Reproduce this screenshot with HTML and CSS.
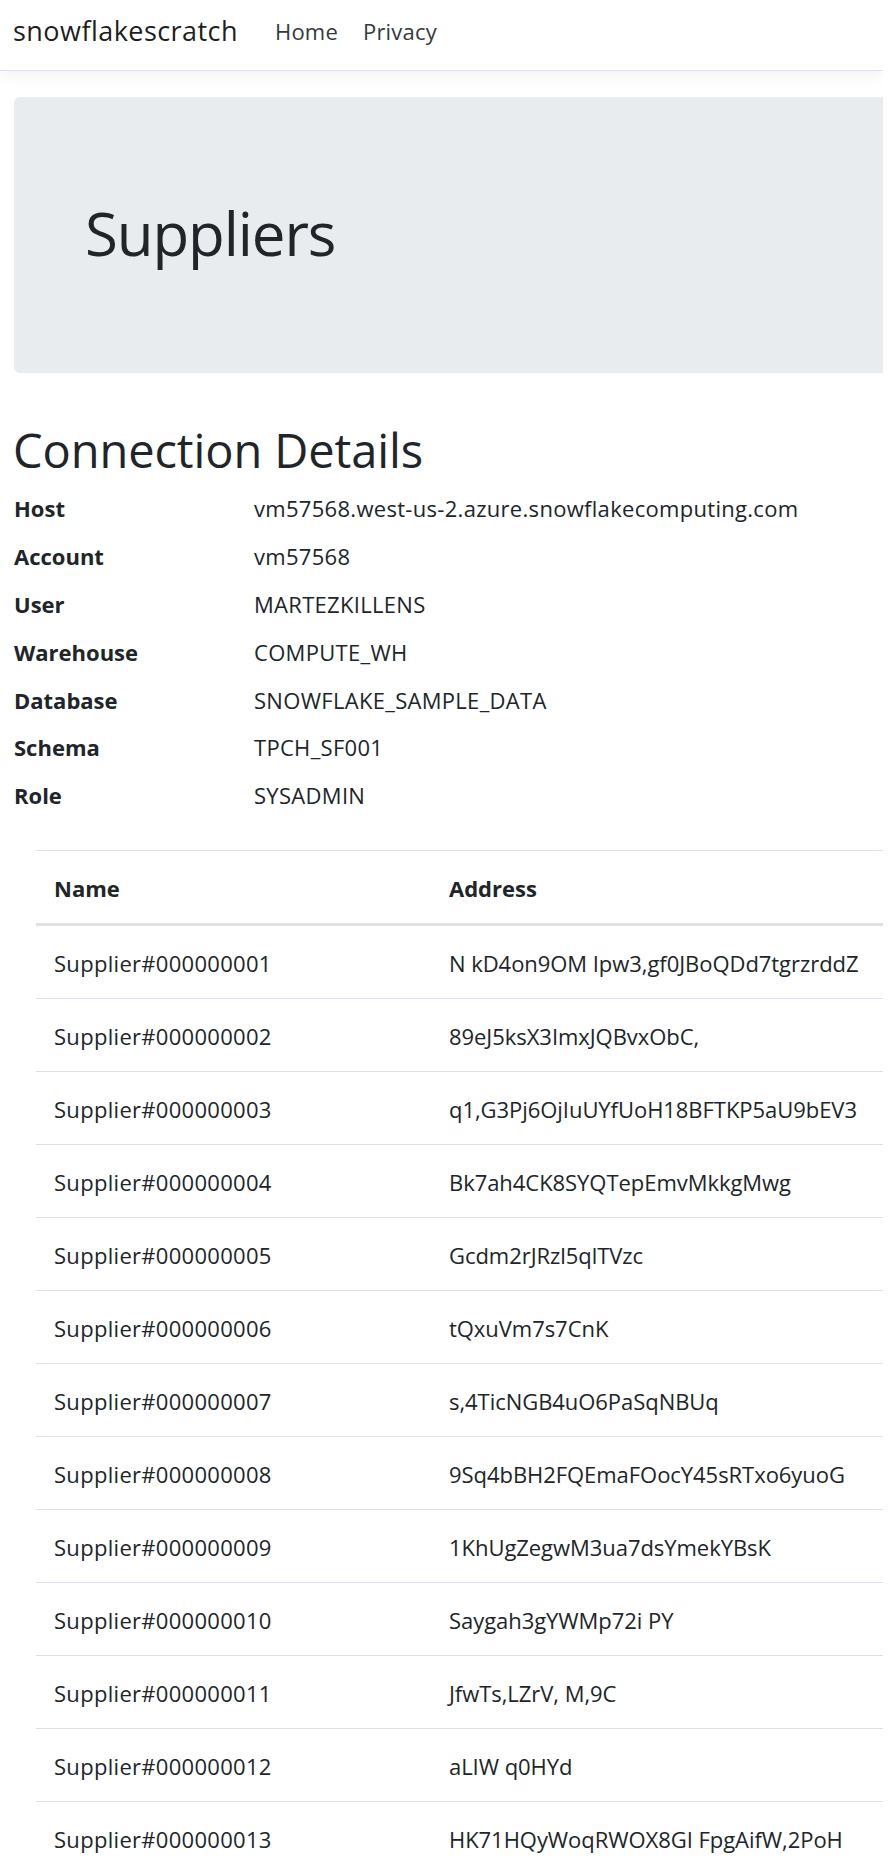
FILE: index.html
```html
<!DOCTYPE html>
<html lang="en">
<head>
<meta charset="utf-8">
<title>Suppliers - snowflakescratch</title>
<link rel="stylesheet" href="styles.css">
</head>
<body>
<div class="page">
  <header class="navbar">
    <a class="brand" href="#">snowflakescratch</a>
    <nav class="nav">
      <a class="nav-link" href="#">Home</a>
      <a class="nav-link" href="#">Privacy</a>
    </nav>
  </header>

  <main class="main">
    <section class="jumbotron">
      <h1 class="display">Suppliers</h1>
    </section>

    <h2 class="section-title">Connection Details</h2>
    <dl class="details">
      <dt>Host</dt><dd>vm57568.west-us-2.azure.snowflakecomputing.com</dd>
      <dt>Account</dt><dd>vm57568</dd>
      <dt>User</dt><dd>MARTEZKILLENS</dd>
      <dt>Warehouse</dt><dd>COMPUTE_WH</dd>
      <dt>Database</dt><dd>SNOWFLAKE_SAMPLE_DATA</dd>
      <dt>Schema</dt><dd>TPCH_SF001</dd>
      <dt>Role</dt><dd>SYSADMIN</dd>
    </dl>

    <table class="table">
      <thead>
        <tr><th class="col-name">Name</th><th class="col-addr">Address</th></tr>
      </thead>
      <tbody>
        <tr><td>Supplier#000000001</td><td class="addr">N kD4on9OM Ipw3,gf0JBoQDd7tgrzrddZ</td></tr>
        <tr><td>Supplier#000000002</td><td class="addr">89eJ5ksX3ImxJQBvxObC,</td></tr>
        <tr><td>Supplier#000000003</td><td class="addr">q1,G3Pj6OjIuUYfUoH18BFTKP5aU9bEV3</td></tr>
        <tr><td>Supplier#000000004</td><td class="addr">Bk7ah4CK8SYQTepEmvMkkgMwg</td></tr>
        <tr><td>Supplier#000000005</td><td class="addr">Gcdm2rJRzl5qlTVzc</td></tr>
        <tr><td>Supplier#000000006</td><td class="addr">tQxuVm7s7CnK</td></tr>
        <tr><td>Supplier#000000007</td><td class="addr">s,4TicNGB4uO6PaSqNBUq</td></tr>
        <tr><td>Supplier#000000008</td><td class="addr">9Sq4bBH2FQEmaFOocY45sRTxo6yuoG</td></tr>
        <tr><td>Supplier#000000009</td><td class="addr">1KhUgZegwM3ua7dsYmekYBsK</td></tr>
        <tr><td>Supplier#000000010</td><td class="addr">Saygah3gYWMp72i PY</td></tr>
        <tr><td>Supplier#000000011</td><td class="addr">JfwTs,LZrV, M,9C</td></tr>
        <tr><td>Supplier#000000012</td><td class="addr">aLIW q0HYd</td></tr>
        <tr><td>Supplier#000000013</td><td class="addr">HK71HQyWoqRWOX8GI FpgAifW,2PoH</td></tr>
      </tbody>
    </table>
  </main>
</div>
</body>
</html>
```
FILE: styles.css
```css
html, body {
  margin: 0;
  padding: 0;
  background: #fff;
}

body {
  font-family: "Open Sans", "Noto Sans", sans-serif;
  font-size: 22px;
  color: #212529;
}

.page {
  width: 883px;
  overflow: hidden;
  background: #fff;
}

/* Navbar */
.navbar {
  display: flex;
  align-items: flex-start;
  height: 70px;
  border-bottom: 1px solid #dee2e6;
  box-shadow: 0 5px 15px rgba(0, 0, 0, 0.05);
  padding-left: 13px;
  position: relative;
  z-index: 1;
  background: #fff;
}

.brand {
  font-size: 27px;
  letter-spacing: 0.45px;
  line-height: 40px;
  margin-top: 11px;
  color: rgba(0, 0, 0, 0.9);
  text-decoration: none;
}

.nav {
  display: flex;
  gap: 25px;
  margin-left: 37px;
  margin-top: 16px;
}

.nav-link {
  font-size: 22px;
  letter-spacing: 0.2px;
  line-height: 30px;
  color: #343a40;
  text-decoration: none;
}

/* Main */
.main {
  padding: 26px 0 0 14px;
}

.jumbotron {
  width: 1000px;
  height: 276px;
  box-sizing: border-box;
  background: #e9ecef;
  border-radius: 6px;
  padding: 100px 0 0 71px;
}

.display {
  margin: 0;
  font-size: 60px;
  font-weight: 400;
  letter-spacing: -1.1px;
  line-height: 72px;
}

.section-title {
  margin: 49px 0 0 -1px;
  font-size: 47px;
  font-weight: 500;
  letter-spacing: -0.1px;
  line-height: 56px;
}

.details {
  display: grid;
  grid-template-columns: 240px 1fr;
  grid-auto-rows: 47.8px;
  margin: 7.4px 0 0 0;
  line-height: 47.8px;
}

.details dt {
  font-weight: 700;
  margin: 0;
}

.details dd {
  margin: 0;
  letter-spacing: 0.3px;
  white-space: nowrap;
}

/* Table */
.table {
  margin: 30px 0 0 22px;
  border-collapse: collapse;
  width: 1100px;
  table-layout: fixed;
  border-top: 1px solid #dee2e6;
}

.col-name {
  width: 359px;
}

.table th,
.table td {
  text-align: left;
  padding: 22.5px 18px 19.5px 18px;
  line-height: 30px;
  white-space: nowrap;
  letter-spacing: 0.3px;
  vertical-align: top;
}

.table th {
  font-weight: 700;
  letter-spacing: 0;
  border-bottom: 3px solid #dee2e6;
}

.table td {
  border-bottom: 1px solid #dee2e6;
}

.table td.addr {
  letter-spacing: -0.05px;
}
```
